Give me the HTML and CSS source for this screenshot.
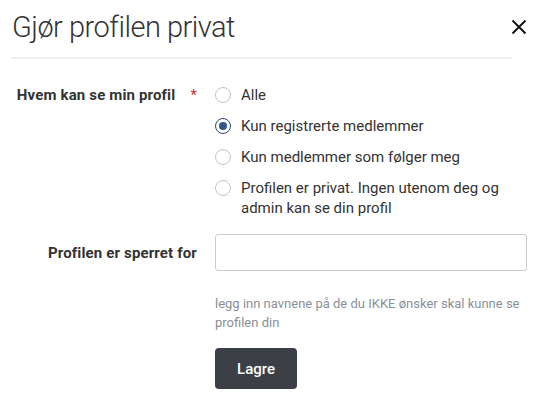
FILE: index.html
```html
<!DOCTYPE html>
<html lang="no">
<head>
<meta charset="utf-8">
<title>Gjør profilen privat</title>
<link rel="stylesheet" href="styles.css">
</head>
<body>
<div class="modal">
  <div class="modal-header">
    <h1 class="title">Gjør profilen privat</h1>
    <button class="close" aria-label="Lukk">
      <svg width="16" height="16" viewBox="0 0 16 16"><path d="M1.5 1.5 L14.5 14.5 M14.5 1.5 L1.5 14.5" stroke="#111" stroke-width="1.9" fill="none"/></svg>
    </button>
  </div>
  <div class="divider"></div>
  <form class="form">
    <div class="label">Hvem kan se min profil<span class="req">*</span></div>
    <div class="options">
      <label class="option"><input type="radio" name="vis"><span>Alle</span></label>
      <label class="option"><input type="radio" name="vis" checked><span>Kun registrerte medlemmer</span></label>
      <label class="option"><input type="radio" name="vis"><span>Kun medlemmer som følger meg</span></label>
      <label class="option"><input type="radio" name="vis"><span>Profilen er privat. Ingen utenom deg og admin kan se din profil</span></label>
    </div>
    <div class="label label-input">Profilen er sperret for</div>
    <div class="field">
      <input class="text-input" type="text">
      <p class="help">legg inn navnene på de du IKKE ønsker skal kunne se profilen din</p>
      <button type="button" class="btn">Lagre</button>
    </div>
  </form>
</div>
</body>
</html>
```
FILE: styles.css
```css
* { box-sizing: border-box; }
html, body { margin: 0; padding: 0; background: #fff; }
body { font-family: Roboto, "Liberation Sans", sans-serif; color: #333; }

.modal-header {
  display: flex;
  justify-content: space-between;
  align-items: flex-start;
  padding: 9px 12px 0 12px;
  height: 57px;
}
.title {
  margin: 0;
  font-size: 29px;
  letter-spacing: -0.5px;
  font-weight: 300;
  line-height: 36px;
  color: #333;
}
.close {
  border: 0;
  background: none;
  padding: 0;
  margin-top: 10px;
  width: 16px;
  height: 16px;
  cursor: pointer;
}
.close svg { display: block; }
.divider {
  height: 2px;
  background: #eeeeee;
  margin: 0 27px 0 11px;
}

.form {
  display: grid;
  grid-template-columns: 197px 1fr;
  column-gap: 18px;
  row-gap: 16px;
  padding: 26px 12px 0 0;
}
.label {
  text-align: right;
  font-weight: 700;
  font-size: 15px;
  letter-spacing: 0.15px;
  line-height: 20px;
  color: #333;
}
.req {
  color: #c9302c;
  margin-left: 15px;
  font-weight: 400;
}
.label-input { padding-top: 9px; }

.options {
  display: flex;
  flex-direction: column;
  gap: 11px;
}
.option {
  display: flex;
  align-items: flex-start;
  gap: 10px;
  font-size: 15px;
  line-height: 20px;
  color: #333;
}
.option input {
  appearance: none;
  -webkit-appearance: none;
  margin: 2px 0 0 0;
  width: 16px;
  height: 16px;
  flex: none;
  border: 1px solid #c4c4c4;
  border-radius: 50%;
  background: #fff;
  position: relative;
}
.option input:checked {
  border-color: #2d4a70;
}
.option input:checked::after {
  content: "";
  position: absolute;
  left: 3px;
  top: 3px;
  width: 8px;
  height: 8px;
  border-radius: 50%;
  background: #34578a;
}

.field { display: flex; flex-direction: column; align-items: flex-start; }
.text-input {
  width: 100%;
  height: 37px;
  border: 1px solid #cccccc;
  border-radius: 3px;
  font: inherit;
  padding: 0 10px;
}
.help {
  margin: 23px 0 0 0;
  font-size: 13px;
  line-height: 19px;
  color: #8a9099;
}
.btn {
  margin-top: 16px;
  width: 82px;
  height: 41px;
  border: 0;
  border-radius: 4px;
  background: #3c3f46;
  color: #fff;
  font-family: Roboto, "Liberation Sans", sans-serif;
  font-size: 15px;
  font-weight: 500;
}
```
